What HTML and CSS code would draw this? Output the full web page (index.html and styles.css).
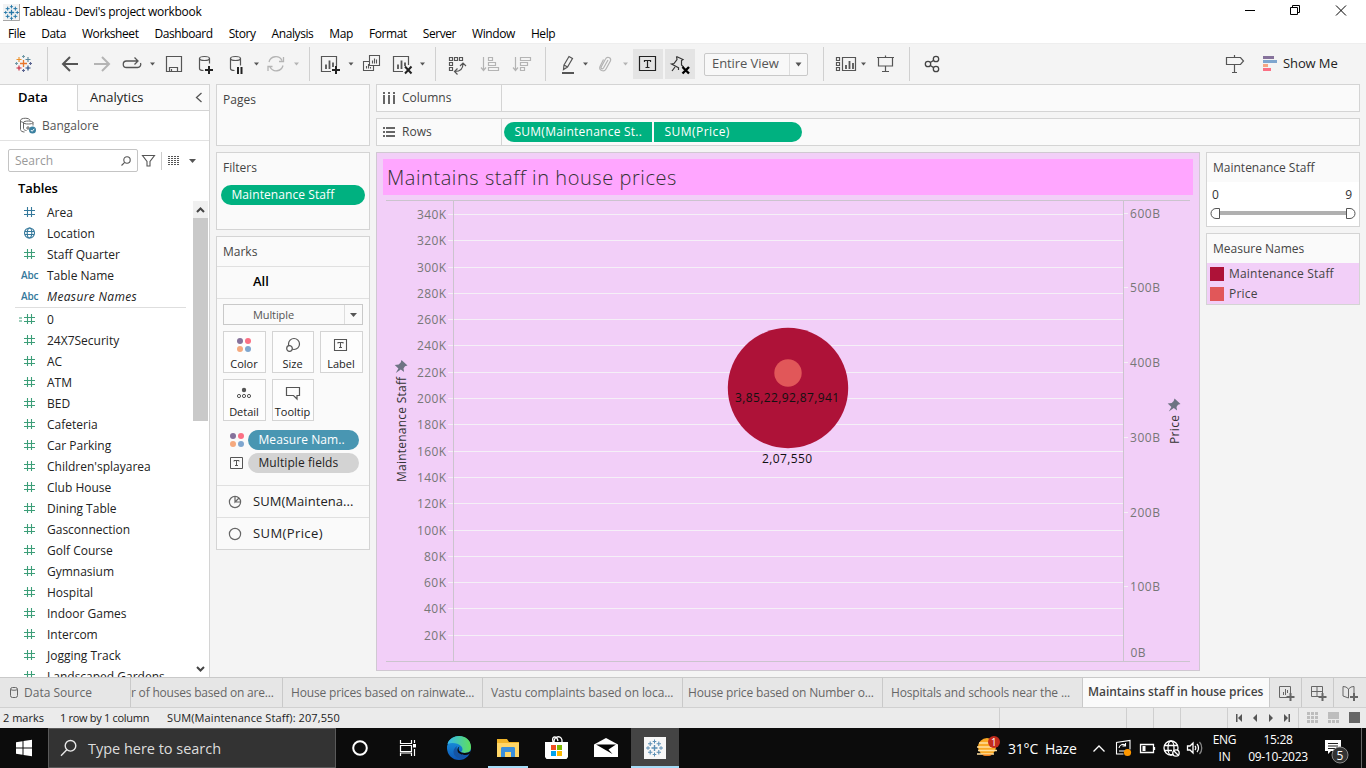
FILE: index.html
```html
<!DOCTYPE html>
<html lang="en">
<head>
<meta charset="utf-8">
<title>Tableau - Devi's project workbook</title>
<link rel="stylesheet" href="styles.css">
</head>
<body>
<svg class="defs" width="0" height="0">
  <defs>
    <g id="hash"><path d="M4.500 1v10M8.500 1v10M1 4.500h11M1 8.500h11" fill="none" stroke="currentColor" stroke-width="1.100"/></g>
    <g id="burst" fill="none" stroke-width="1.400">
      <path d="M8.500 5.500v6M5.500 8.500h6"/>
      <path d="M8.500 0v4M6.700 2h3.600M8.500 13v4M6.700 15h3.600M2 6.700v3.600M0 8.500h4M15 6.700v3.600M13 8.500h4" stroke-width="1"/>
      <path d="M4.200 2v4.400M2 4.200h4.400M12.800 2v4.400M10.600 4.200H15M4.200 10.600V15M2 12.800h4.400M12.800 10.600V15M10.600 12.800H15" stroke-width="1.100"/>
    </g>
    <g id="pin"><path d="M401.500 360l6 5.500-2.500.8-1.500 2.200.6 3.500-3.300-2.400-5 3.400 2.600-4.600-3.700-3.400 4-.5 2-2z"/></g>
  </defs>
</svg>

<header class="titlebar">
  <svg class="applogo" width="17" height="17" viewBox="-1 -1 19 19"><rect x="-1" y="-1" width="19" height="19" fill="#f3f3f3"/><path d="M17.500-1v18.500H-1" fill="none" stroke="#999"/><use href="#burst" stroke="#2377a8"/></svg>
  <span class="apptitle">Tableau - Devi's project workbook</span>
  <svg class="winctl" width="136" height="24" viewBox="1230 0 136 24" fill="none" stroke="#000"><path d="M1245 10.500h10M1290.500 7.500h7v7h-7zM1292.500 7.500v-2h7v7h-2M1336 5.500l10 10M1346 5.500l-10 10"/></svg>
</header>
<nav class="menu">
  <span>File</span><span>Data</span><span>Worksheet</span><span>Dashboard</span><span>Story</span><span>Analysis</span><span>Map</span><span>Format</span><span>Server</span><span>Window</span><span>Help</span>
</nav>

<div class="toolbar">
  <svg width="47" height="40" viewBox="0 44 47 40" fill="none" stroke-width="1.100">
    <path d="M23.500 60v7M20 63.500h7" stroke="#e8762c" stroke-width="1.300"/>
    <path d="M19 57v5M16.500 59.500h5" stroke="#eb912c"/><path d="M28 57v5M25.500 59.500h5" stroke="#59879b"/>
    <path d="M19 65.500v5M16.500 68h5" stroke="#c72035"/><path d="M28 65.500v5M25.500 68h5" stroke="#1f457e"/>
    <path d="M23.500 55v3M22 56.500h3M16.500 62v3M15 63.500h3" stroke="#7199a6"/><path d="M30.500 62v3M29 63.500h3M23.500 69v3M22 70.500h3" stroke="#5b6591"/>
  </svg><i class="sep"></i>
  <svg width="38" height="40" viewBox="48 44 38 40" fill="none" stroke="#555" stroke-width="2"><path d="M78 64H63M70 57l-7 7 7 7"/></svg>
  <svg width="32" height="40" viewBox="86 44 32 40" fill="none" stroke="#b4b4b4" stroke-width="2"><path d="M94 64h15M102 57l7 7-7 7"/></svg>
  <svg width="42" height="40" viewBox="118 44 42 40" fill="none" stroke="#555" stroke-width="1.300"><path d="M130 67.500h-3.500a3.200 3.200 0 0 1 0-6.500H137M129 67.500h8.500a3.200 3.200 0 0 0 3-4.500M134.500 57.500l3.500 3.500-3.500 3.500"/><path d="M150 62.500h5l-2.500 3z" fill="#555" stroke="none"/></svg>
  <svg width="30" height="40" viewBox="160 44 30 40" fill="none" stroke="#555" stroke-width="1.200"><path d="M166.500 56.500h15v15h-15zM169.500 71v-3.500h8V71M171.500 71v-2"/></svg>
  <svg width="32" height="40" viewBox="190 44 32 40" fill="none" stroke="#555" stroke-width="1.200"><ellipse cx="204.500" cy="58.500" rx="5" ry="2"/><path d="M199.500 58.500v10c0 1 1.500 2 4 2M209.500 58.500v5"/><path d="M209 66v8M205 70h8" stroke="#222" stroke-width="2"/></svg>
  <svg width="40" height="40" viewBox="222 44 40 40" fill="none" stroke="#555" stroke-width="1.200"><ellipse cx="235.500" cy="58.500" rx="5" ry="2"/><path d="M230.500 58.500v10c0 1 1.500 2 4 2M240.500 58.500v7"/><path d="M238 67v7M241.500 67v7" stroke="#222" stroke-width="2"/><path d="M254 62.500h5l-2.500 3z" fill="#555" stroke="none"/></svg>
  <svg width="47" height="40" viewBox="262 44 47 40" fill="none" stroke="#b4b4b4" stroke-width="1.300"><path d="M269 62a7 7 0 0 1 13-1.500M283 65.500a7 7 0 0 1-13 1.500M283.500 57v4.500h-4.500M268 71v-4.500h4.500"/><path d="M294 62.500h5l-2.500 3z" fill="#b4b4b4" stroke="none"/></svg><i class="sep"></i>
  <svg width="48" height="40" viewBox="310 44 48 40" fill="none" stroke="#555" stroke-width="1.200"><path d="M331 71.500h-9.500v-15h15V66"/><path d="M326 64.500V69M329.500 60.500V69M333 62.500V67" stroke-width="1.800"/><path d="M336 66v8M332 70h8" stroke="#222" stroke-width="2"/><path d="M348.500 62.500h5l-2.500 3z" fill="#555" stroke="none"/></svg>
  <svg width="30" height="40" viewBox="358 44 30 40" fill="none" stroke="#555" stroke-width="1.100"><path d="M369.500 55.500h10v10h-10zM369 61.500h-5.500v9h10V66M372.500 63.500v-3M374.500 63.500v-5M376.500 63.500v-4M366.500 68.500V66M368.500 68.500V64M370.500 68.500V67"/></svg>
  <svg width="47" height="40" viewBox="388 44 47 40" fill="none" stroke="#555" stroke-width="1.200"><path d="M403 71.500h-9.500v-15h15V65"/><path d="M398 64.500V69M401.500 60.500V69M405 62.500V66" stroke-width="1.800"/><path d="M405 66.500l6.500 7M411.500 66.500l-6.500 7" stroke="#222" stroke-width="2"/><path d="M420 62.500h5l-2.500 3z" fill="#555" stroke="none"/></svg><i class="sep"></i>
  <svg width="38" height="40" viewBox="436 44 38 40" fill="none" stroke="#555" stroke-width="1.200"><path d="M449.500 57.500h3v3h-3zM454.500 57.500h3v3h-3zM459.500 57.500h3v3h-3zM449.500 62.500h3v3h-3zM449.500 67.500h3v3h-3zM455 71.500c5 0 8-3 8-8M457.500 68.500l-3 3 3 3M460 66l3-3 3 3"/></svg>
  <svg width="33" height="40" viewBox="474 44 33 40" fill="none" stroke="#b4b4b4" stroke-width="1.200"><path d="M483.500 57v13M481 67.500l2.500 3 2.500-3M488.500 57.500h4v3h-4zM488.500 62.500h7v3h-7zM488.500 67.500h10v3h-10z"/></svg>
  <svg width="38" height="40" viewBox="507 44 38 40" fill="none" stroke="#b4b4b4" stroke-width="1.200"><path d="M515.500 57v13M513 67.500l2.500 3 2.500-3M520.500 57.500h10v3h-10zM520.500 62.500h7v3h-7zM520.500 67.500h4v3h-4z"/></svg><i class="sep"></i>
  <svg width="47" height="40" viewBox="546 44 47 40" fill="none" stroke="#555" stroke-width="1.200"><path d="M564 65l5-8.500 3.500 2-5 8.500-4 2.500zM564 65l3.500 2"/><path d="M562 73h12" stroke-width="2"/><path d="M583 62.500h5l-2.500 3z" fill="#555" stroke="none"/></svg>
  <svg width="40" height="40" viewBox="593 44 40 40" fill="none" stroke="#b4b4b4" stroke-width="1.200"><path d="M608 60l-4.500 8c-1 1.500-3 .5-2.300-1l4.300-8c1.500-3 6-1.500 5 1.800l-4.500 8.200c-2 3.500-7.500 1.500-6-2.500l3.500-7"/><path d="M623 62.500h5l-2.500 3z" fill="#b4b4b4" stroke="none"/></svg>
  <span class="tbtn"><svg width="30" height="30" viewBox="633 49 30 30" fill="none" stroke="#222" stroke-width="1.200"><path d="M639.500 56.500h16v14h-16zM644.500 62v-1.500h6V62M647.500 60.500v7M645.500 67.500h4"/></svg></span>
  <span class="tbtn tbtn-pin"><svg width="30" height="30" viewBox="665 49 30 30" fill="none" stroke="#333" stroke-width="1.200"><path d="M676.500 56.500l6.500 3-1.500 1v4.500l2 2M676.500 56.500l.5 3-3 4-2.500.5 7.500 4M675 67l-3 4M678.500 68v2"/><path d="M682.500 67l6.500 6.500M689 67l-6.500 6.500" stroke="#000" stroke-width="2.400"/></svg></span>
  <div class="fit"><span>Entire View</span><b><svg width="7" height="5" viewBox="0 0 7 5"><path d="M.500.500h6L3.500 4.500z" fill="#555"/></svg></b></div>
  <i class="sep sep-after-fit"></i>
  <svg width="47" height="40" viewBox="824 44 47 40" fill="none" stroke="#555" stroke-width="1.200"><path d="M842.500 57.500h13v13h-13zM836.500 57.500h3v3h-3zM836.500 62.500h3v3h-3zM836.500 67.500h3v3h-3z"/><path d="M846 65v4M849.500 61v8M853 63v6" stroke-width="1.800"/><path d="M861 62.500h5l-2.500 3z" fill="#555" stroke="none"/></svg>
  <svg width="38" height="40" viewBox="871 44 38 40" fill="none" stroke="#555" stroke-width="1.200"><path d="M877 57.500h17M878.500 57.500v8.500h14v-8.500M885.500 66v5.500M882 71.500h7M885.500 55.500v2"/></svg><i class="sep"></i>
  <svg width="40" height="40" viewBox="910 44 40 40" fill="none" stroke="#444" stroke-width="1.300"><circle cx="928" cy="64" r="2.700"/><circle cx="936" cy="59" r="2.700"/><circle cx="936" cy="69" r="2.700"/><path d="M930.300 62.500l3.400-2.100M930.300 65.500l3.400 2.100"/></svg>
  <svg class="push" width="34" height="40" viewBox="1218 44 34 40" fill="none" stroke="#555" stroke-width="1.200"><path d="M1226.500 57.500h14l3 3.500-3 3.500h-14zM1234.500 55v2.500M1234.500 64.500v7.500M1232 72.500h5"/></svg>
  <svg width="31" height="40" viewBox="1252 44 31 40"><path d="M1263 56h11v3h-11z" fill="#86729b"/><path d="M1263 60h14v3h-14z" fill="#7fa6cf"/><path d="M1263 64h5v3h-5z" fill="#f5a683"/><path d="M1263 68h8v3h-8z" fill="#fb7084"/></svg>
  <span class="showme">Show Me</span>
</div>

<main class="work">
  <aside class="side">
    <div class="sidetabs"><span class="st-data">Data</span><span class="st-an">Analytics<svg width="8" height="12" viewBox="0 0 8 12"><path d="M6.500 1L1.500 5.500l5 4.500" fill="none" stroke="#555" stroke-width="1.300"/></svg></span></div>
    <div class="source"><svg width="18" height="17" viewBox="19 116 18 17" fill="none" stroke="#666"><path d="M30 119.500c0-3-9.500-3-9.500 0v9c0 1.500 2 2.500 4 2.500M23.500 121.500c0-2 9.500-2 9.500 0s-9.500 2-9.500 0v6c0 1 1.500 2 3 2M33 121.500v3M20.500 119.500c0 1 1 1.500 3 2M26 127h4M28 125v4"/><circle cx="32.500" cy="129" r="3.500" fill="#3a80a0" stroke="none"/><path d="M30.800 129l1.300 1.300 2.200-2.500" stroke="#fff"/></svg><span>Bangalore</span></div>
    <div class="searchrow">
      <div class="search"><span>Search</span><svg width="10" height="10" viewBox="0 0 10 10" fill="none" stroke="#555" stroke-width="1.100"><circle cx="6" cy="4" r="3.200"/><path d="M3.700 6.300L.5 9.500"/></svg></div>
      <svg width="71" height="22" viewBox="138 149 71 22" fill="none" stroke="#555"><path d="M142.500 154.500h12l-4.500 6v4.500h-3v-4.500z" stroke-width="1.100"/><path d="M161.500 151v18" stroke="#ccc"/><path d="M168 155.500h12M168 157.500h12M168 159.500h12M168 161.500h12M168 163.500h12" stroke-dasharray="2 1"/><path d="M189 158h7l-3.500 4z" fill="#555" stroke="none"/></svg>
    </div>
    <div class="tables">Tables</div>
    <div class="listwrap">
      <div class="fields">
        <div class="grp">
          <div class="f blue"><svg width="13" height="12"><use href="#hash"/></svg><span>Area</span></div>
          <div class="f blue"><svg width="13" height="12" fill="none" stroke="currentColor" stroke-width="1.100"><circle cx="6.500" cy="6" r="5"/><ellipse cx="6.500" cy="6" rx="2.300" ry="5"/><path d="M2 4.500h9M2 7.500h9"/></svg><span>Location</span></div>
          <div class="f"><svg width="13" height="12"><use href="#hash"/></svg><span>Staff Quarter</span></div>
          <div class="f blue"><em class="abc">Abc</em><span>Table Name</span></div>
          <div class="f blue it"><em class="abc">Abc</em><span>Measure Names</span></div>
        </div>
        <div class="grp2">
          <div class="f"><svg class="calc" width="17" height="12"><path d="M0 5h3M0 8h3" stroke="currentColor"/><use href="#hash" x="4"/></svg><span>0</span></div>
          <div class="f"><svg width="13" height="12"><use href="#hash"/></svg><span>24X7Security</span></div>
          <div class="f"><svg width="13" height="12"><use href="#hash"/></svg><span>AC</span></div>
          <div class="f"><svg width="13" height="12"><use href="#hash"/></svg><span>ATM</span></div>
          <div class="f"><svg width="13" height="12"><use href="#hash"/></svg><span>BED</span></div>
          <div class="f"><svg width="13" height="12"><use href="#hash"/></svg><span>Cafeteria</span></div>
          <div class="f"><svg width="13" height="12"><use href="#hash"/></svg><span>Car Parking</span></div>
          <div class="f"><svg width="13" height="12"><use href="#hash"/></svg><span>Children'splayarea</span></div>
          <div class="f"><svg width="13" height="12"><use href="#hash"/></svg><span>Club House</span></div>
          <div class="f"><svg width="13" height="12"><use href="#hash"/></svg><span>Dining Table</span></div>
          <div class="f"><svg width="13" height="12"><use href="#hash"/></svg><span>Gasconnection</span></div>
          <div class="f"><svg width="13" height="12"><use href="#hash"/></svg><span>Golf Course</span></div>
          <div class="f"><svg width="13" height="12"><use href="#hash"/></svg><span>Gymnasium</span></div>
          <div class="f"><svg width="13" height="12"><use href="#hash"/></svg><span>Hospital</span></div>
          <div class="f"><svg width="13" height="12"><use href="#hash"/></svg><span>Indoor Games</span></div>
          <div class="f"><svg width="13" height="12"><use href="#hash"/></svg><span>Intercom</span></div>
          <div class="f"><svg width="13" height="12"><use href="#hash"/></svg><span>Jogging Track</span></div>
          <div class="f"><svg width="13" height="12"><use href="#hash"/></svg><span>Landscaped Gardens</span></div>
        </div>
      </div>
      <div class="scroll">
        <svg class="up" width="15" height="17" viewBox="0 0 15 17"><path d="M4 11l3.500-3.500L11 11" fill="none" stroke="#444" stroke-width="2"/></svg>
        <div class="thumb"></div>
        <svg class="down" width="15" height="17" viewBox="0 0 15 17"><path d="M4 7l3.500 3.500L11 7" fill="none" stroke="#444" stroke-width="2"/></svg>
      </div>
    </div>
  </aside>

  <section class="cards">
    <div class="card pages"><h3>Pages</h3></div>
    <div class="card filters"><h3>Filters</h3><div class="pill green">Maintenance Staff</div></div>
    <div class="card marks">
      <h3>Marks</h3>
      <div class="all">All</div>
      <div class="mtype"><span>Multiple</span><b><svg width="7" height="4" viewBox="0 0 7 4"><path d="M0 0h7L3.500 4z" fill="#555"/></svg></b></div>
      <div class="mgrid">
        <div class="mb"><svg width="16" height="16"><circle cx="4" cy="4" r="3" fill="#86729b"/><circle cx="12" cy="4" r="3" fill="#fb7084"/><circle cx="4" cy="12" r="3" fill="#f5a97e"/><circle cx="12" cy="12" r="3" fill="#7fa6cf"/></svg><span>Color</span></div>
        <div class="mb"><svg width="16" height="16" fill="none" stroke="#555" stroke-width="1.200"><circle cx="9" cy="7" r="5.500"/><circle cx="4.500" cy="11.500" r="2.800" fill="#fff"/></svg><span>Size</span></div>
        <div class="mb"><svg width="16" height="16" fill="none" stroke="#555"><path d="M1.500 2.500h12v11h-12zM5 6.500v-1h5v1M7.500 5.500v5M6 10.500h3" stroke-width="1.100"/></svg><span>Label</span></div>
        <div class="mb"><svg width="16" height="16" fill="none" stroke="#555"><circle cx="8" cy="5" r="2.200" fill="#555" stroke="none"/><circle cx="3" cy="11" r="1.600"/><circle cx="8" cy="11" r="1.600"/><circle cx="13" cy="11" r="1.600"/></svg><span>Detail</span></div>
        <div class="mb"><svg width="16" height="16" fill="none" stroke="#555" stroke-width="1.200"><path d="M1.500 2.500h13v8h-2.500v3.500l-3.500-3.500h-7z"/></svg><span>Tooltip</span></div>
      </div>
      <div class="mrow"><svg width="16" height="16"><circle cx="4" cy="4" r="3" fill="#86729b"/><circle cx="12" cy="4" r="3" fill="#fb7084"/><circle cx="4" cy="12" r="3" fill="#f5a97e"/><circle cx="12" cy="12" r="3" fill="#7fa6cf"/></svg><div class="pill teal">Measure Nam..</div></div>
      <div class="mrow"><svg width="16" height="16" fill="none" stroke="#555"><path d="M1.500 2.500h12v11h-12zM5 6.500v-1h5v1M7.500 5.500v5M6 10.500h3"/></svg><div class="pill grey">Multiple fields</div></div>
      <div class="msum first"><svg width="14" height="14" fill="none" stroke="#666" stroke-width="1.200"><circle cx="7" cy="7" r="5.600"/><path d="M7 1.500V7l4-4M7 7h5.500"/></svg><span>SUM(Maintena...</span></div>
      <div class="msum"><svg width="14" height="14" fill="none" stroke="#666" stroke-width="1.200"><circle cx="7" cy="7" r="5.600"/></svg><span class="wide">SUM(Price)</span></div>
    </div>
  </section>

  <section class="main">
    <div class="shelf"><div class="shl"><svg width="14" height="14" fill="#666"><path d="M1 1h2v2H1zM6 1h2v2H6zM11 1h2v2h-2zM1 4h2v9H1zM6 4h2v9H6zM11 4h2v9h-2z"/></svg><span>Columns</span></div></div>
    <div class="shelf"><div class="shl"><svg width="14" height="14" fill="#666"><path d="M1 2h2v2H1zM1 6h2v2H1zM1 10h2v2H1zM4 2h9v2H4zM4 6h9v2H4zM4 10h9v2H4z"/></svg><span>Rows</span></div>
      <div class="pill green rp1">SUM(Maintenance St..</div><div class="pill green rp2">SUM(Price)</div></div>
    <div class="lower">
      <div class="viz">
        <h1>Maintains staff in house prices</h1>
        <svg class="chart" width="822" height="475" viewBox="377 195 822 475">
          <path d="M448 214.500h675M448 240.500h675M448 267.500h675M448 293.500h675M448 319.500h675M448 345.500h675M448 372.500h675M448 398.500h675M448 424.500h675M448 451.500h675M448 477.500h675M448 503.500h675M448 530.500h675M448 556.500h675M448 582.500h675M448 608.500h675M448 635.500h675" stroke="#f5f0f7"/>
          <path d="M1124 213.500h4M1124 287.500h4M1124 362.500h4M1124 437.500h4M1124 512.500h4M1124 586.500h4M1124 661.500h4" stroke="#f5f0f7"/>
          <path d="M386 200.500h804M386 661.500h804M453.500 201v460M1123.500 201v460" stroke="#cbc4ce"/>
          <g class="lab">
            <text x="417" y="219" textLength="29">340K</text><text x="417" y="245" textLength="29">320K</text><text x="417" y="272" textLength="29">300K</text><text x="417" y="298" textLength="29">280K</text><text x="417" y="324" textLength="29">260K</text><text x="417" y="350" textLength="29">240K</text><text x="417" y="377" textLength="29">220K</text><text x="417" y="403" textLength="29">200K</text><text x="417" y="429" textLength="29">180K</text><text x="417" y="456" textLength="29">160K</text><text x="417" y="482" textLength="29">140K</text><text x="417" y="508" textLength="29">120K</text><text x="417" y="535" textLength="29">100K</text><text x="424" y="561" textLength="22">80K</text><text x="424" y="587" textLength="22">60K</text><text x="424" y="613" textLength="22">40K</text><text x="424" y="640" textLength="22">20K</text>
            <text x="1130" y="218" textLength="30">600B</text><text x="1130" y="292" textLength="30">500B</text><text x="1130" y="367" textLength="30">400B</text><text x="1130" y="442" textLength="30">300B</text><text x="1130" y="517" textLength="30">200B</text><text x="1130" y="591" textLength="30">100B</text><text x="1130.500" y="657" textLength="15">0B</text>
          </g>
          <circle cx="788" cy="388" r="60.200" fill="#ae1238"/>
          <circle cx="788" cy="373" r="13.700" fill="#e15759"/>
          <g class="val"><text x="735" y="402" textLength="104">3,85,22,92,87,941</text><text x="762" y="463" textLength="50">2,07,550</text></g>
          <g class="axis"><text transform="translate(406 482) rotate(-90)" textLength="105">Maintenance Staff</text><text transform="translate(1179 444) rotate(-90)" textLength="29">Price</text></g>
          <use href="#pin" fill="#6e7484"/><use href="#pin" x="773" y="38.500" fill="#6e7484"/>
        </svg>
      </div>
      <div class="right">
        <div class="card rc1"><h3>Maintenance Staff</h3><div class="slider"><div class="sv"><span>0</span><span>9</span></div>
          <svg width="152" height="14" viewBox="1207 206 152 14"><path d="M1219 211h128v4h-128z" fill="#b0b0b0"/><path d="M1219.500 208.500h-3.500a5 5 0 0 0 0 10h3.500zM1346.500 208.500h3.500a5 5 0 0 1 0 10h-3.500z" fill="#fff" stroke="#555"/></svg></div></div>
        <div class="card rc2"><h3>Measure Names</h3><div class="legend"><div><i class="sw s1"></i>Maintenance Staff</div><div><i class="sw s2"></i>Price</div></div></div>
      </div>
    </div>
  </section>
</main>

<div class="tabs">
  <div class="t ds"><svg width="11" height="13" fill="none" stroke="#666"><rect x="1.500" y="1.500" width="7" height="10" rx="2"/><path d="M1.500 3.500c1.500 1 5.500 1 7 0"/></svg><span>Data Source</span></div>
  <div class="t t1"><span>r of houses based on are...</span></div>
  <div class="t t2"><span>House prices based on rainwate...</span></div>
  <div class="t t3"><span>Vastu complaints based on loca...</span></div>
  <div class="t t4"><span>House price based on Number o...</span></div>
  <div class="t t5"><span>Hospitals and schools near the ...</span></div>
  <div class="t on"><span>Maintains staff in house prices</span></div>
  <div class="t ti"><svg width="31" height="29" viewBox="1270 678 31 29" fill="none" stroke="#666"><path d="M1287 697.500h-7.500v-11h11v7M1283.500 695v-3M1285.500 695v-6M1287.500 693v-3"/><path d="M1290.500 693v8M1286.500 697h8" stroke-width="2"/></svg></div>
  <div class="t ti"><svg width="31" height="29" viewBox="1302 678 31 29" fill="none" stroke="#666"><path d="M1319 696.500h-7.500v-10h11v7M1317 686v10M1311.500 691.500h11"/><path d="M1322.500 693v8M1318.500 697h8" stroke-width="2"/></svg></div>
  <div class="t ti last"><svg width="32" height="29" viewBox="1334 678 32 29" fill="none" stroke="#666"><path d="M1348.500 698l-5.500-2v-9.500l3 .5 2.500 2 2.500-2 3-.5v7M1348.500 689v9"/><path d="M1354 693v8M1350 697h8" stroke-width="2"/></svg></div>
</div>
<div class="status">
  <span class="s-a">2 marks</span><span class="s-b">1 row by 1 column</span><span class="s-c">SUM(Maintenance Staff): 207,550</span>
  <svg class="push" width="368" height="20" viewBox="998 708 368 20"><path d="M999.500 708v20M1126.500 708v20M1153.500 708v20M1180.500 708v20M1227.500 708v20M1298.500 708v20" stroke="#cfcfcf"/><g fill="#555"><path d="M1236 714h1.500v8h-1.500zM1242 714v8l-4-4zM1257 714v8l-4-4zM1269 714v8l4-4zM1284 714v8l4-4zM1288.500 714h1.500v8h-1.500z"/></g><path d="M1307 712h3v3h-3zM1311 712h3v3h-3zM1315 712h3v3h-3zM1307 716h3v3h-3zM1311 716h3v3h-3zM1315 716h3v3h-3zM1307 720h3v3h-3zM1311 720h3v3h-3zM1315 720h3v3h-3zM1328 712h11v7h-11zM1328 720h3v3h-3zM1332 720h3v3h-3zM1336 720h3v3h-3z" fill="#bdbdbd"/><path d="M1349 712h11v11h-11z" fill="#666"/></svg>
</div>

<footer class="taskbar">
  <svg width="48" height="40" viewBox="0 728 48 40"><path d="M16 742.200l6.500-1v6.300H16zM23.500 741l8.500-1.200v7.700h-8.500zM16 748.500h6.500v6.300l-6.500-1zM23.500 748.500h8.500v7.700l-8.500-1.200z" fill="#fff"/></svg>
  <div class="tsearch"><svg width="18" height="18" fill="none" stroke="#e8e8e8" stroke-width="1.400"><circle cx="10.500" cy="6.800" r="5.300"/><path d="M6.800 10.800L1 16.800"/></svg><span>Type here to search</span></div>
  <svg width="48" height="40" viewBox="336 728 48 40"><circle cx="360" cy="748" r="6.800" fill="none" stroke="#fff" stroke-width="2"/></svg>
  <svg width="49" height="40" viewBox="384 728 49 40" fill="none" stroke="#fff" stroke-width="1.200"><path d="M400.500 740v3.500h11V740M400.500 745.500h11v6h-11zM400.500 756v-3h11v3M414.500 740v3M414.500 749v7"/><path d="M413 744h3v3.500h-3z" fill="#fff" stroke="none"/></svg>
  <svg width="52" height="40" viewBox="433 728 52 40"><defs><linearGradient id="e1" x1="0" y1="0" x2="1" y2="0"><stop offset="0" stop-color="#35b8ef"/><stop offset="1" stop-color="#5fe05a"/></linearGradient><linearGradient id="e2" x1="0" y1="0" x2="0" y2="1"><stop offset="0" stop-color="#1b9de2"/><stop offset="1" stop-color="#0d56b8"/></linearGradient></defs>
    <circle cx="459" cy="748" r="12" fill="url(#e2)"/><path d="M447.500 744c3-11 23-11 23.500 3 0 6-6 7-10 5 2-1.500 2-4 0-6-3-3-9-4-13.500-2z" fill="url(#e1)"/><path d="M457 746c-2 5 3 9.500 12 7.500-2 3-5 5-8 5.500-8-1-10-9-4-13z" fill="#1554a4"/><path d="M459.500 746.500c-2.500 3 .5 6.500 5 6.500 2.500 0 5-.8 6.500-2l-1.500 3c-5 2-11 .5-12-3-.5-2 .5-4 2-4.500z" fill="#0b0b0b"/></svg>
  <svg width="48" height="40" viewBox="485 728 48 40"><path d="M497 739h10l2 3h10v15h-22z" fill="#f0b429"/><path d="M497 743h22v14h-22z" fill="#ffd667"/><path d="M501 757v-8.500c0-1 .5-1.500 1.500-1.500h11c1 0 1.500.5 1.500 1.500v8.500h-4v-5h-6v5z" fill="#3a8fdc"/><path d="M488 766h40v2h-40z" fill="#a5dcf8"/></svg>
  <svg width="48" height="40" viewBox="533 728 48 40"><path d="M553 742c-2-7 4-6 5-1M554 742c0-7 9-7 8 0" fill="none" stroke="#fff" stroke-width="1.300"/><path d="M545 742h23v15l-1.500 2h-20l-1.500-2z" fill="#fff"/><path d="M551 745h5v5h-5z" fill="#f04f23"/><path d="M557 745h5v5h-5z" fill="#7db900"/><path d="M551 751h5v5h-5z" fill="#00a3ee"/><path d="M557 751h5v5h-5z" fill="#fdb900"/></svg>
  <svg width="50" height="40" viewBox="581 728 50 40"><path d="M594 744.500l12-6.500 12 6.500V757h-24z" fill="#fff"/><path d="M596 744.500h20l-7.500 5 4 4.500-7-4z" fill="#050505"/></svg>
  <svg width="48" height="40" viewBox="631 728 48 40"><path d="M631 728h48v40h-48z" fill="#444"/><path d="M644 737h22v22h-22z" fill="#f7f7f7"/><use href="#burst" x="646" y="739.500" stroke="#5c8fb5"/><path d="M631 766h48v2h-48z" fill="#a5dcf8"/></svg>
  <svg class="push" width="28" height="40" viewBox="974 728 28 40"><circle cx="987" cy="747" r="9" fill="#f9a825"/><path d="M978 750.500h19M977 754h17M979 743h12M977 747h15" stroke="#ffe0a0" stroke-width="1.300"/><path d="M982 754.500h10c-1.500 2-8 2-10 0z" fill="#ee7b1a"/><circle cx="994" cy="742" r="6" fill="#c42b1c"/><text class="n1" x="991" y="745.500">1</text></svg>
  <span class="temp">31°C&nbsp; Haze</span>
  <svg width="122" height="40" viewBox="1087 728 122 40" fill="none" stroke="#fff" stroke-width="1.300"><path d="M1093.500 751.500l5.500-5.500 5.500 5.500"/><path d="M1116 742.500l14-2v9M1116.500 742v12h7M1119 748a4 4 0 0 1 6-3M1125.500 743v3h-3M1119 751h6" stroke-width="1.100"/><circle cx="1127.500" cy="752.500" r="3.600" fill="#ff9800" stroke="none"/><path d="M1140.500 744.500h13v8h-13zM1154.500 747v3"/><path d="M1142.500 746h3v5h-3z" fill="#fff" stroke="none"/><circle cx="1171" cy="748" r="7"/><ellipse cx="1171" cy="748" rx="3" ry="7"/><path d="M1164 745.500h14M1164 750.500h8"/><circle cx="1176" cy="753" r="3.200" fill="#111"/><path d="M1174 751l4 4M1187.500 746h2.500l3-3v10l-3-3h-2.500zM1195 746c1 1 1 3 0 4M1197 744c2 2 2 6 0 8"/><path d="M1199.500 742c3 3 3 9 0 12" stroke="#888"/></svg>
  <div class="lang"><span>ENG</span><span>IN</span></div>
  <div class="clock"><span>15:28</span><span>09-10-2023</span></div>
  <svg width="44" height="40" viewBox="1322 728 44 40"><path d="M1325 740h16v11h-10l-3 3v-3h-3z" fill="#fff"/><path d="M1328 743.500h10M1328 746h10M1328 748.500h7" stroke="#222"/><circle cx="1340" cy="755" r="8" fill="#333" stroke="#888"/><text class="n5" x="1336.500" y="759.500">5</text><path d="M1361.500 728v40" stroke="#666"/></svg>
</footer>
</body>
</html>
```
FILE: styles.css
```css
* { box-sizing: border-box; }
body { margin: 0; width: 1366px; height: 768px; overflow: hidden; background: #f4f4f4; font-family: "Open Sans", "Noto Sans", sans-serif; font-size: 12px; color: #333; display: flex; flex-direction: column; }
svg { display: block; flex: none; }
.defs { position: absolute; }
h1, h3 { margin: 0; font-weight: 400; }
span { white-space: nowrap; }

.titlebar { height: 24px; background: #fff; display: flex; align-items: center; flex: none; }
.applogo { margin: 0 3px; }
.apptitle { color: #000; font-size: 12px; letter-spacing: -0.31px; padding-bottom: 2px; }
.winctl { margin-left: auto; }
.menu { height: 19px; background: #fff; display: flex; gap: 16px; padding-left: 8px; line-height: 19px; color: #000; flex: none; letter-spacing: -0.42px; }

.toolbar { height: 41px; border-top: 1px solid #eee; display: flex; align-items: center; flex: none; }
.sep { width: 1px; height: 34px; background: #d0d0d0; flex: none; }
.tbtn { width: 30px; height: 30px; background: #e4e4e4; }
.tbtn-pin { margin-left: 2px; }
.fit { margin-left: 9px; width: 104px; height: 23px; border: 1px solid #c9c9c9; background: #f8f8f8; display: flex; align-items: center; border-radius: 2px; }
.fit span { padding: 0 0 2px 7px; flex: 1; font-size: 13px; color: #555; letter-spacing: -0.08px; }
.fit b { width: 18px; height: 21px; border-left: 1px solid #ddd; display: grid; place-items: center; }
.sep-after-fit { margin-left: 15px; }
.push { margin-left: auto; }
.showme { width: 83px; font-size: 13px; color: #222; padding-bottom: 2px; letter-spacing: -0.1px; }

.work { height: 593px; display: flex; flex: none; overflow: hidden; }
.side { width: 210px; background: #fff; border-top: 1px solid #d4d4d4; border-right: 1px solid #d4d4d4; display: flex; flex-direction: column; }
.sidetabs { height: 26px; display: flex; flex: none; line-height: 25px; color: #111; }
.st-data { width: 77px; padding-left: 18px; font-weight: 600; font-size: 13px; color: #000; }
.st-an { flex: 1; border-left: 1px solid #d4d4d4; border-bottom: 1px solid #d4d4d4; background: #fafafa; padding: 0 6px 0 12px; display: flex; justify-content: space-between; align-items: center; font-size: 13px; color: #222; }
.source { height: 30px; border-bottom: 1px solid #e2e2e2; display: flex; align-items: center; padding-left: 19px; gap: 5px; color: #555; flex: none; }
.source span { padding-bottom: 1px; }
.searchrow { height: 38px; display: flex; align-items: center; padding: 1px 0 0 8px; flex: none; }
.search { width: 130px; height: 23px; border: 1px solid #c4c4c4; border-radius: 2px; display: flex; align-items: center; justify-content: space-between; padding: 0 6px; color: #999; }
.tables { height: 22px; line-height: 18px; padding-left: 18px; font-weight: 600; font-size: 13px; color: #000; flex: none; letter-spacing: -0.1px; }
.listwrap { display: flex; justify-content: space-between; height: 476px; overflow: hidden; }
.fields { width: 186px; margin-left: 15px; margin-right: -8px; flex: none; }
.grp { width: 171px; height: 107px; border-bottom: 1px solid #dedede; }
.f { height: 21px; display: flex; align-items: center; padding-left: 8px; color: #3c9e78; }
.f.blue { color: #34789b; }
.f span { margin-left: 11px; color: #222; padding-top: 1px; }
.f svg { margin-right: 0; }
.f .calc { margin-left: -4px; }
.it span { font-style: italic; letter-spacing: 0.35px; }
.abc { font-style: normal; font-size: 10px; font-weight: 600; margin-left: -2px; width: 15px; letter-spacing: -0.2px; padding-top: 1px; }
.scroll { width: 16px; padding-right: 1px; background: #fff; display: flex; flex-direction: column; }
.up { background: #f0f0f0; }
.thumb { height: 203px; background: #c9c9c9; }
.down { margin-top: auto; }

.cards { width: 154px; margin-left: 6px; display: flex; flex-direction: column; gap: 6px; flex: none; }
.card { border: 1px solid #d4d4d4; background: #fafafa; }
.card h3 { font-size: 12px; line-height: 30px; height: 29px; padding-left: 6px; color: #444; }
.pages { height: 62px; }
.filters { height: 78px; }
.marks { height: 314px; }
.pill { height: 20px; line-height: 20px; padding-left: 10.500px; border-radius: 10px; color: #fff; white-space: nowrap; letter-spacing: 0.08px; }
.green { background: #00b180; }
.filters .pill { margin: 3px 4px; }
.all { height: 33px; border-top: 1px solid #e0e0e0; border-bottom: 1px solid #e0e0e0; line-height: 29px; padding-left: 36px; font-weight: 600; font-size: 13px; color: #000; }
.mtype { margin: 5px 6px 0; height: 21px; border: 1px solid #c9c9c9; display: flex; color: #555; font-size: 11px; align-items: center; }
.mtype span { flex: 1; padding-left: 29px; letter-spacing: -0.1px; }
.mtype b { width: 18px; height: 19px; border-left: 1px solid #ddd; display: grid; place-items: center; }
.mgrid { display: grid; grid-template-columns: 43px 42px 43px; gap: 6px; padding: 6px 6px 0; }
.mb { height: 42px; border: 1px solid #d4d4d4; display: flex; flex-direction: column; align-items: center; padding: 5px 1px 0 0; font-size: 11px; color: #222; background: #fdfdfd; }
.mb span { line-height: 16px; margin-top: 3px; }
.mrow { display: flex; align-items: center; padding-left: 12px; gap: 3px; height: 20px; margin-top: 3px; }
.mgrid + .mrow { margin-top: 9px; }
.mrow .pill { width: 111px; }
.teal { background: #4996b2; }
.grey { background: #d3d3d3; color: #222; }
.msum { height: 32px; border-top: 1px solid #e0e0e0; display: flex; align-items: center; padding-left: 11px; gap: 11px; font-size: 13px; color: #222; }
.msum span { padding-bottom: 2px; letter-spacing: 0.05px; }
.msum .wide { letter-spacing: 0.4px; }
.msum.first { margin-top: 12px; }

.main { width: 984px; margin-left: 6px; display: flex; flex-direction: column; gap: 6px; }
.shelf { height: 28px; border: 1px solid #d4d4d4; background: #fafafa; display: flex; align-items: center; flex: none; }
.shl { width: 125px; height: 26px; border-right: 1px solid #d4d4d4; display: flex; align-items: center; padding-left: 5px; gap: 6px; color: #444; }
.shl span { padding-bottom: 1px; }
.rp1 { margin-left: 2px; width: 148px; border-radius: 10px 0 0 10px; letter-spacing: 0.25px; }
.rp2 { margin-left: 2px; width: 148px; border-radius: 0 10px 10px 0; letter-spacing: 0.45px; }
.lower { display: flex; gap: 6px; }
.viz { width: 824px; height: 519px; border: 1px solid #d0c8d2; background: #f2cff8; }
.viz h1 { margin: 6px 6px 0; height: 36px; line-height: 37px; background: #ffa6ff; padding-left: 4px; font-size: 20px; font-weight: 300; color: #333; letter-spacing: 0.56px; }
.lab { font-size: 12px; fill: #777; }
.val { font-size: 12px; fill: #111; }
.axis { font-size: 12px; fill: #333; }
.right { width: 154px; display: flex; flex-direction: column; gap: 6px; }
.rc1 { height: 75px; }
.rc2 { height: 72px; }
.slider { background: #fff; height: 44px; padding-top: 4px; }
.sv { display: flex; justify-content: space-between; padding: 0 7px 0 5px; line-height: 17px; height: 20px; }
.rc2 h3 { height: 29px; }
.legend { background: #f2cff8; height: 41px; padding: 1px 3px; line-height: 20px; color: #444; letter-spacing: 0.2px; }
.legend div { display: flex; align-items: center; gap: 5px; height: 20px; }
.sw { width: 14px; height: 14px; }
.s1 { background: #ae1238; }
.s2 { background: #e15759; }

.tabs { height: 31px; border-top: 1px solid #c9c9c9; border-bottom: 1px solid #d0d0d0; background: #e6e6e6; display: flex; flex: none; color: #666; }
.t { border-right: 1px solid #c9c9c9; display: flex; align-items: center; flex: none; letter-spacing: -0.16px; }
.ds { width: 131px; padding-left: 9px; gap: 4px; letter-spacing: 0; }
.t1 { width: 152px; letter-spacing: -0.2px; }
.t2, .t3, .t4, .t5 { width: 200px; padding-left: 8px; }
.t3 { letter-spacing: -0.1px; }
.t4 { padding-left: 5px; }
.on { width: 187px; background: #fafafa; padding: 0 0 3px 5px; font-weight: 600; color: #444; letter-spacing: -0.06px; }
.ti { width: 32px; }
.last { width: 32px; border-right: 0; }
.status { height: 20px; background: #ebebeb; display: flex; align-items: center; font-size: 11px; color: #222; flex: none; padding-left: 3px; }
.status span { padding-bottom: 1px; }
.s-a { width: 57px; }
.s-b { width: 107px; letter-spacing: -0.3px; }
.s-c { letter-spacing: 0.1px; }

.taskbar { height: 40px; background: #0c0c0c; display: flex; align-items: center; flex: none; color: #fff; }
.tsearch { width: 288px; height: 40px; background: #333; border: 1px solid #5a5a5a; display: flex; align-items: center; padding-left: 11px; gap: 10px; font-size: 14.5px; color: #ddd; }
.tsearch span { letter-spacing: -0.02px; }
.n1 { font-size: 10px; fill: #fff; }
.n5 { font-size: 12px; fill: #fff; }
.temp { width: 79px; margin-left: 6px; font-size: 14px; letter-spacing: -0.2px; }
.lang, .clock { display: flex; flex-direction: column; align-items: center; font-size: 12px; line-height: 17px; letter-spacing: -0.3px; }
.lang { width: 31px; }
.clock { width: 76px; margin-right: 6px; }
```
